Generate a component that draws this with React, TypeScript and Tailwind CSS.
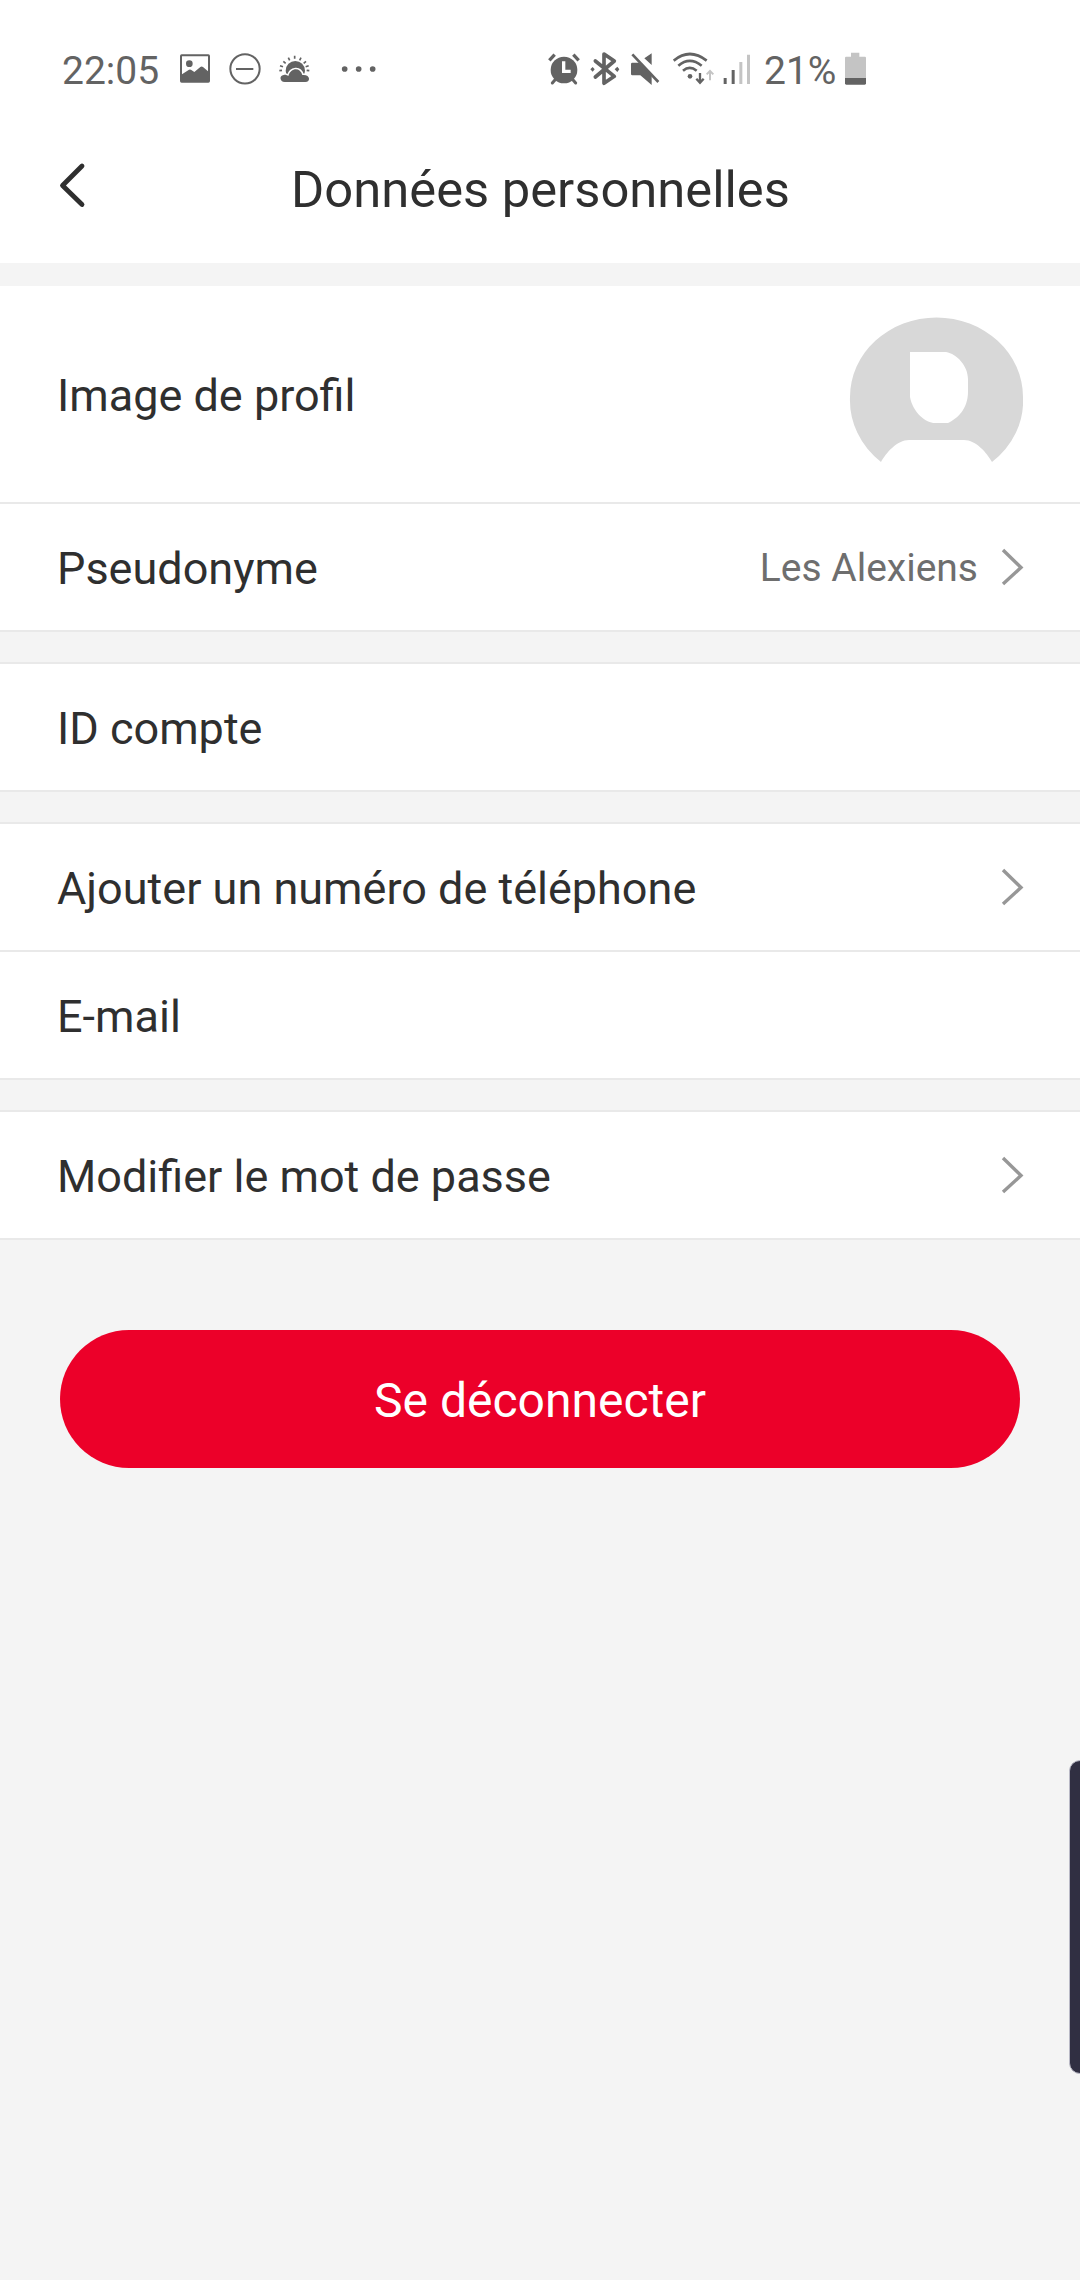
import React from 'react'

const ImageIcon: React.FC = () => (
  <svg className="w-[30px] h-9" viewBox="0 0 90 108" fill="#636363">
    <path fillRule="evenodd" d="M5 13H85Q90 13 90 18V93Q90 98 85 98H5Q0 98 0 93V18Q0 13 5 13ZM6 19V73L27 59Q31 57 34 60L43 66L61 51Q65 48 69 51L84 64V19Z" />
    <circle cx="28" cy="41" r="10" />
  </svg>
)

const DoNotDisturbIcon: React.FC = () => (
  <svg className="w-8 h-9" viewBox="0 0 96 108" fill="none" stroke="#636363">
    <circle cx="48" cy="56.5" r="44" strokeWidth="6" />
    <path d="M21 57H73" strokeWidth="6" />
  </svg>
)

const WeatherIcon: React.FC = () => (
  <svg className="w-8 h-9" viewBox="0 0 96 108">
    <circle cx="49" cy="62" r="29" fill="#636363" />
    <path d="M47 17V26M28 23L32 31M66 23L62 31M13 34L20 40M81 34L74 40M3 47L12 50M91 62L83 61M1 62L9 61M89 47L80 50" stroke="#636363" strokeWidth="5" />
    <path
      d="M17 96C2 96 0 76 14 75C20 73 24 76 28 78C35 52 64 51 70 75C94 72 96 96 79 96Z"
      fill="#636363"
      stroke="#fff"
      strokeWidth="9"
      style={{ paintOrder: 'stroke' }}
    />
  </svg>
)

const MoreIcon: React.FC = () => (
  <svg className="w-9 h-9" viewBox="0 0 108 108" fill="#636363">
    <circle cx="14" cy="57" r="8.5" />
    <circle cx="56" cy="57" r="8.5" />
    <circle cx="98" cy="57" r="8.5" />
  </svg>
)

const AlarmIcon: React.FC = () => (
  <svg className="w-8 h-9" viewBox="0 0 96 108">
    <path d="M4 31L20 14M92 31L76 14" stroke="#636363" strokeWidth="10" />
    <path d="M13 99L24 86M83 99L72 86" stroke="#636363" strokeWidth="9" strokeLinecap="round" />
    <circle cx="48" cy="60" r="40" fill="#636363" />
    <path d="M47 34V64H68" fill="none" stroke="#fff" strokeWidth="10" />
  </svg>
)

const BluetoothIcon: React.FC = () => (
  <svg className="w-[30px] h-9" viewBox="0 0 90 108">
    <path d="M16 33L73 79L42 100V12L73 33L16 81" fill="none" stroke="#636363" strokeWidth="11" strokeLinejoin="round" strokeLinecap="round" />
    <path d="M1 58L8 51L14 58L8 65ZM74 58L82 50L88 58L82 66Z" fill="#636363" />
  </svg>
)

const MuteIcon: React.FC = () => (
  <svg className="w-[30px] h-9" viewBox="0 0 90 108">
    <path d="M4 38H24L62 74V105L28 76H4Q0 76 0 72V42Q0 38 4 38ZM40 25L62 10V45Z" fill="#636363" />
    <path d="M4 13L82 96" stroke="#636363" strokeWidth="8" />
  </svg>
)

const WifiIcon: React.FC = () => (
  <svg className="w-[42px] h-9" viewBox="0 0 126 108" fill="none" stroke="#636363" strokeWidth="8">
    <path d="M2 32Q50 -8 101 32M16 47Q50 18 86 47M30 62Q50 45 71 62" />
    <circle cx="51" cy="79" r="7" fill="#636363" stroke="none" />
    <path d="M81 69V98M70 86L81 98L92 86" strokeWidth="7" />
    <path d="M111 91V64M101 73L111 63L121 73" stroke="#c4c4c4" strokeWidth="6" />
  </svg>
)

const SignalIcon: React.FC = () => (
  <svg className="w-7 h-9" viewBox="0 0 84 108">
    <path d="M2 84H11V102H2ZM26 60H35V102H26Z" fill="#636363" />
    <path d="M49 36H58V102H49ZM72 14H81V102H72Z" fill="#c4c4c4" />
  </svg>
)

const BatteryIcon: React.FC = () => (
  <svg className="w-[21px] h-9" viewBox="0 0 63 108">
    <path d="M18 8H43V20H60Q63 20 63 24V84H0V24Q0 20 3 20H18Z" fill="#c4c4c4" />
    <path d="M0 84H63V100Q63 104 59 104H4Q0 104 0 100Z" fill="#636363" />
  </svg>
)

const StatusBar: React.FC = () => (
  <div className="h-[138px] pt-[50px] flex items-start text-[#636363] text-[39px] leading-9">
    <span className="w-[98px] ml-[62px] mr-5 pt-[3px] whitespace-nowrap">22:05</span>
    <ImageIcon />
    <div className="ml-[19px]"><DoNotDisturbIcon /></div>
    <div className="ml-[18px]"><WeatherIcon /></div>
    <div className="ml-[29px]"><MoreIcon /></div>
    <div className="ml-[172px]"><AlarmIcon /></div>
    <div className="ml-[10px]"><BluetoothIcon /></div>
    <div className="ml-[11px]"><MuteIcon /></div>
    <div className="ml-3"><WifiIcon /></div>
    <div className="ml-[8px]"><SignalIcon /></div>
    <span className="w-[81px] ml-[13px] pt-[3px] whitespace-nowrap">21%</span>
    <BatteryIcon />
  </div>
)

const Header: React.FC = () => (
  <header className="h-[125px] flex items-start">
    <button className="w-[120px] pl-[57px] pt-[23px]" aria-label="Retour">
      <svg className="w-[30px] h-[48px]" viewBox="0 0 30 48" fill="none" stroke="#2f2f2f" strokeWidth="4.8" strokeLinecap="round" strokeLinejoin="round">
        <path d="M25 5L5.5 24.5L25 43.5" />
      </svg>
    </button>
    <h1 className="flex-1 pt-[22px] text-center text-[50.7px] leading-[60px]">Données personnelles</h1>
    <div className="w-[119px]" />
  </header>
)

const Chevron: React.FC = () => (
  <svg className="w-[24px] h-[40px]" viewBox="0 0 24 40" fill="none" stroke="#979797" strokeWidth="3.4">
    <path d="M2 3L20 20.5L2 37" />
  </svg>
)

const Avatar: React.FC = () => (
  <svg className="w-[174px] h-[146px]" viewBox="0 0 174 146">
    <path
      fillRule="evenodd"
      fill="#d8d8d8"
      d="M32 145A86.5 80.5 0 0 1 1 80A86 79 0 0 1 174 80A88 80 0 0 1 143 145C138 136 127 123 115 123H60C48 123 37 136 32 145ZM61 35V80C64 96 77 106 86 106H99C108 102 119 92 119 75V62C119 49 108 37 97 35Z"
    />
  </svg>
)

interface RowProps {
  label: string
  value?: string
  arrow?: boolean
}

const Row: React.FC<RowProps> = ({ label, value, arrow }) => (
  <div className="box-content h-[126px]">
    <div className="h-full pl-[57px] pr-[55px] flex items-center justify-between">
      <span className="text-[45px] leading-[54px] pt-[3px]">{label}</span>
      <div className="flex items-center gap-[23px]">
        {value && <span className="text-[39px] text-[#6e6e6e] pt-[3px]">{value}</span>}
        {arrow && <Chevron />}
      </div>
    </div>
  </div>
)

const Section: React.FC<{ children: React.ReactNode }> = ({ children }) => (
  <section className="bg-white border-y-2 border-[#e9e9e9] divide-y-2 divide-[#e9e9e9]">
    {children}
  </section>
)

export default function App() {
  return (
    <div className="relative w-[1080px] h-[2280px] overflow-hidden bg-[#f4f4f4] text-[#2f2f2f] font-['Roboto',sans-serif]">
      <div className="bg-white">
        <StatusBar />
        <Header />
      </div>

      <main className="pt-[23px] flex flex-col gap-[30px]">
        <section className="bg-white border-b-2 border-[#e9e9e9] divide-y-2 divide-[#e9e9e9]">
          <div className="box-content h-[216px] flex items-start justify-between">
            <span className="pl-[57px] pt-[83px] text-[45px] leading-[54px]">Image de profil</span>
            <div className="pt-[31px] pr-[57px]"><Avatar /></div>
          </div>
          <Row label="Pseudonyme" value="Les Alexiens" arrow />
        </section>

        <Section>
          <Row label="ID compte" />
        </Section>

        <Section>
          <Row label="Ajouter un numéro de téléphone" arrow />
          <Row label="E-mail" />
        </Section>

        <Section>
          <Row label="Modifier le mot de passe" arrow />
        </Section>
      </main>

      <div className="px-[60px] pt-[90px]">
        <button className="w-full h-[138px] pt-[4px] rounded-full bg-[#ec0029] text-white text-[48px]">
          Se déconnecter
        </button>
      </div>

      {/* Edge panel handle */}
      <div className="absolute top-[1760px] right-[-11px] w-[22px] h-[314px] rounded-[14px] border border-[#b9b9c6] bg-[#302f42]" />
    </div>
  )
}
